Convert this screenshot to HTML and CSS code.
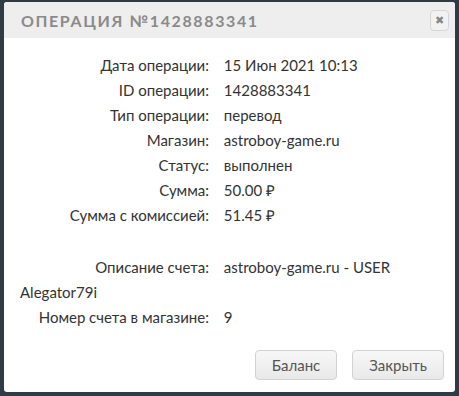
FILE: index.html
```html
<!DOCTYPE html>
<html>
<head>
  <meta charset="utf-8">
  <title>Операция №1428883341</title>
  <link rel="stylesheet" href="styles.css">
</head>
<body>
  <div class="modal">
    <header class="modal-head">
      <h3>Операция №1428883341</h3>
      <button type="button" class="close">&#x2716;</button>
    </header>
    <div class="modal-body">
      <p><span class="label">Дата операции:</span> 15 Июн 2021 10:13</p>
      <p><span class="label">ID операции:</span> 1428883341</p>
      <p><span class="label">Тип операции:</span> перевод</p>
      <p><span class="label">Магазин:</span> astroboy-game.ru</p>
      <p><span class="label">Статус:</span> выполнен</p>
      <p><span class="label">Сумма:</span> 50.00 &#8381;</p>
      <p><span class="label">Сумма с комиссией:</span> 51.45 &#8381;</p>
      <p class="gap"><span class="label">Описание счета:</span> astroboy-game.ru - USER Alegator79i</p>
      <p><span class="label">Номер счета в магазине:</span> 9</p>
    </div>
    <footer class="modal-foot">
      <button type="button" class="btn">Баланс</button>
      <button type="button" class="btn">Закрыть</button>
    </footer>
  </div>
</body>
</html>
```

FILE: styles.css
```css
html, body {
  margin: 0;
  height: 100%;
}
body {
  background: #2f3c45;
  font-family: Lato, "Open Sans", sans-serif;
  color: #333;
  padding: 2px 4px 4px 4px;
  box-sizing: border-box;
}
.modal {
  background: #fff;
  border-radius: 3px;
  height: 390px;
  display: flex;
  flex-direction: column;
}
.modal-head {
  background: #eeeeee;
  height: 36px;
  display: flex;
  align-items: center;
  justify-content: space-between;
  padding: 0 6px 0 17px;
  border-radius: 3px 3px 0 0;
}
.modal-head h3 {
  margin: 0;
  font-size: 16px;
  font-weight: 700;
  letter-spacing: 1.6px;
  text-transform: uppercase;
  color: #8a8a8a;
}
.close {
  width: 19px;
  height: 21px;
  padding: 0;
  border: 1px solid #d6d6d6;
  border-radius: 4px;
  background: #f2f2f2;
  color: #888;
  font-size: 11px;
  line-height: 19px;
  cursor: pointer;
}
.modal-body {
  padding: 15px 16px 0 16px;
  flex: 1;
}
.modal-body p {
  margin: 0;
  font-size: 15px;
  line-height: 25px;
}
.modal-body p.gap {
  margin-top: 27px;
}
.label {
  display: inline-block;
  width: 189px;
  text-align: right;
  margin-right: 11px;
}
.modal-foot {
  display: flex;
  justify-content: flex-end;
  gap: 15px;
  padding: 0 11px 12px 0;
}
.btn {
  height: 30px;
  padding: 0 16px;
  font-family: Lato, "Open Sans", sans-serif;
  font-size: 15px;
  color: #555;
  border: 1px solid #d2d2d2;
  border-radius: 4px;
  background: linear-gradient(#f7f7f7, #e9e9e9);
  cursor: pointer;
}
```
